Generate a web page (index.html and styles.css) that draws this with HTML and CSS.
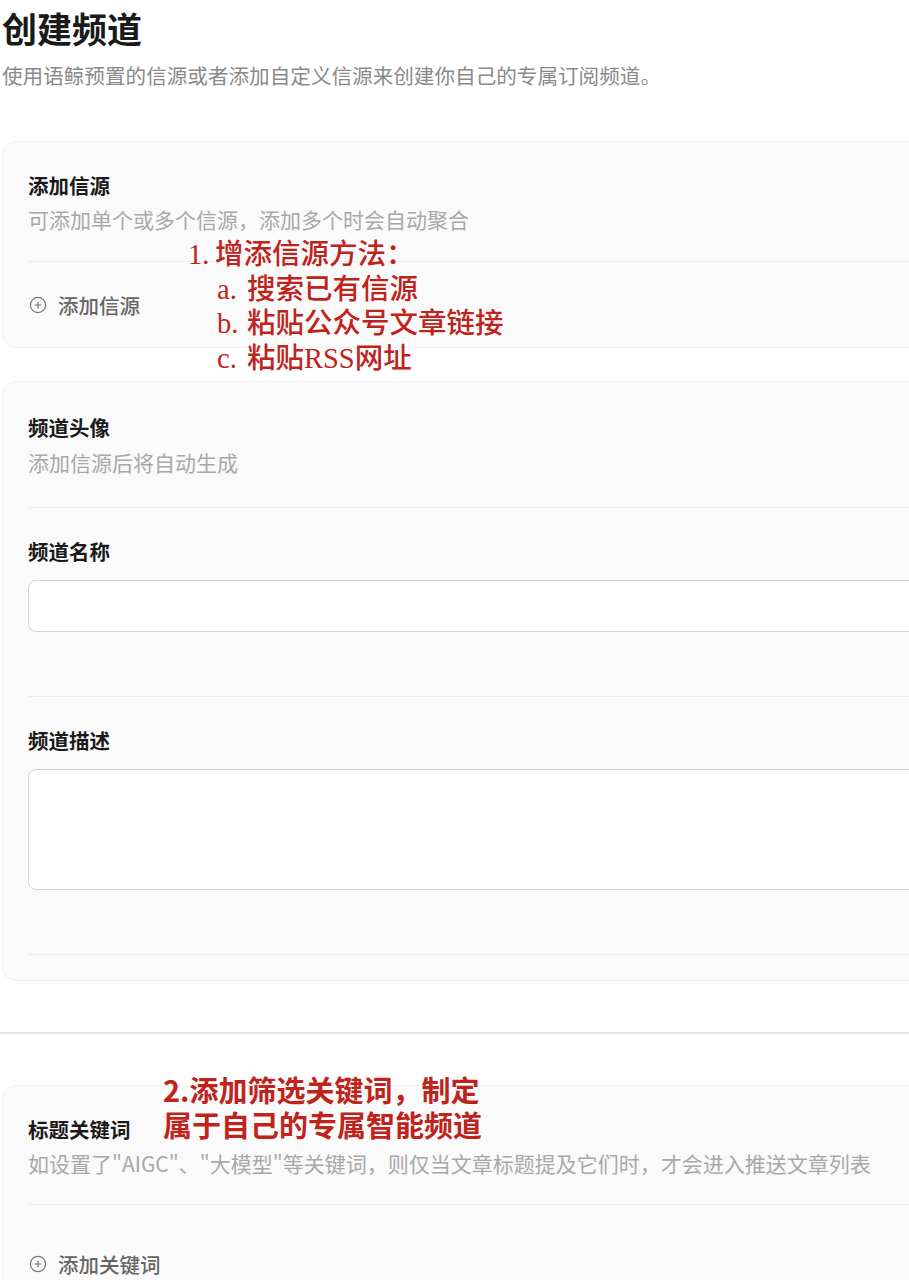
FILE: index.html
```html
<!doctype html>
<html lang="zh-CN">
<head>
<meta charset="utf-8">
<title>创建频道</title>
<link rel="stylesheet" href="styles.css">
</head>
<body>
<div class="page">
  <h1 class="title">创建频道</h1>
  <p class="subtitle">使用语鲸预置的信源或者添加自定义信源来创建你自己的专属订阅频道。</p>

  <div class="card card-sources">
    <div class="section">
      <div class="label">添加信源</div>
      <div class="desc">可添加单个或多个信源，添加多个时会自动聚合</div>
    </div>
    <div class="section section-add">
      <a class="add-btn" href="#">
        <svg class="plus-icon" width="18" height="18" viewBox="0 0 18 18">
          <circle cx="9" cy="9" r="7.6" fill="none" stroke="#777" stroke-width="1.2"/>
          <path d="M9 5.6v6.8M5.6 9h6.8" stroke="#777" stroke-width="1.2" fill="none"/>
        </svg>
        添加信源
      </a>
    </div>
  </div>

  <div class="card card-info">
    <div class="section section-avatar">
      <div class="label">频道头像</div>
      <div class="desc">添加信源后将自动生成</div>
    </div>
    <div class="section section-field">
      <div class="label">频道名称</div>
      <input class="input" type="text">
    </div>
    <div class="section section-field">
      <div class="label">频道描述</div>
      <textarea class="input textarea"></textarea>
    </div>
    <div class="section section-empty"></div>
  </div>

  <hr class="rule">

  <div class="card card-keywords">
    <div class="section section-kw">
      <div class="label">标题关键词</div>
      <div class="desc">如设置了"AIGC"、"大模型"等关键词，则仅当文章标题提及它们时，才会进入推送文章列表</div>
    </div>
    <div class="section section-kw-add">
      <a class="add-btn" href="#">
        <svg class="plus-icon" width="18" height="18" viewBox="0 0 18 18">
          <circle cx="9" cy="9" r="7.6" fill="none" stroke="#777" stroke-width="1.2"/>
          <path d="M9 5.6v6.8M5.6 9h6.8" stroke="#777" stroke-width="1.2" fill="none"/>
        </svg>
        添加关键词
      </a>
    </div>
  </div>

  <div class="note note-sources">
    <div><span class="num first">1.</span>增添信源方法：</div>
    <div class="sub"><span class="num">a.</span>搜索已有信源</div>
    <div class="sub"><span class="num">b.</span>粘贴公众号文章链接</div>
    <div class="sub"><span class="num">c.</span>粘贴RSS网址</div>
  </div>
  <div class="note note-keywords">
    <div>2.添加筛选关键词，制定</div>
    <div>属于自己的专属智能频道</div>
  </div>
</div>
</body>
</html>
```

FILE: styles.css
```css
html, body {
    margin: 0;
    padding: 0;
    background: #fff;
    overflow: hidden;
}
body {
    font-family: "Noto Sans CJK SC", "Noto Sans", sans-serif;
    color: #1a1a1a;
}
.page {
    position: relative;
    width: 1100px;
    padding-left: 2px;
}
.title {
    margin: 0;
    padding-top: 6px;
    font-size: 35px;
    line-height: 44px;
    font-weight: 700;
    color: #1a1a1a;
}
.subtitle {
    margin: 11px 0 0;
    font-size: 20.6px;
    line-height: 28px;
    color: #8a8a8a;
}
.card {
    background: #fafafa;
    border: 1px solid #f0f0f0;
    border-radius: 14px;
    padding-left: 25px;
}
.card-sources {
    margin-top: 52px;
}
.card-info {
    margin-top: 33px;
}
.card-keywords {
    margin-top: 51px;
}
.section {
    padding: 29px 0 28px;
    border-bottom: 1px solid #ececec;
}
.section:last-child {
    border-bottom: none;
}
.label {
    font-size: 20.5px;
    line-height: 28px;
    font-weight: 700;
    color: #1a1a1a;
}
.desc {
    margin-top: 6px;
    font-size: 21px;
    line-height: 28px;
    color: #a8a8a8;
}
.add-btn {
    display: flex;
    align-items: center;
    gap: 11px;
    font-size: 20.5px;
    line-height: 28px;
    font-weight: 500;
    color: #666;
    text-decoration: none;
}
.plus-icon {
    display: block;
    margin-left: 1px;
}
.section-avatar {
    padding: 31px 0 31px;
}
.section-avatar .desc {
    margin-top: 7px;
}
.section-field {
    padding: 29px 0 64px;
}
.input {
    display: block;
    box-sizing: border-box;
    width: 100%;
    height: 52px;
    margin-top: 15px;
    border: 1px solid #d4d4d4;
    border-radius: 8px;
    background: #fff;
    font: inherit;
    outline: none;
    resize: none;
}
.textarea {
    height: 121px;
}
.section-empty {
    padding: 0;
    height: 25px;
}
.rule {
    margin: 51px 0 0 -2px;
    border: none;
    border-top: 2px solid #e4e4e4;
    height: 0;
}
.section-kw {
    padding: 29px 0 27px;
}
.section-kw-add {
    padding: 45px 0 28px;
}
.note {
    position: absolute;
    color: #bf231c;
    white-space: nowrap;
}
.note-sources {
    left: 188px;
    top: 238px;
    font-family: "Liberation Serif", "Noto Sans CJK SC", serif;
    font-size: 28.5px;
    line-height: 34.7px;
    font-weight: 500;
}
.note-sources .num {
    display: inline-block;
    width: 30px;
}
.note-sources .num.first {
    width: 27px;
}
.note-sources .sub {
    padding-left: 29px;
}
.note-keywords {
    left: 163px;
    top: 1072px;
    font-family: "Noto Sans CJK SC", sans-serif;
    font-size: 29px;
    line-height: 35px;
    font-weight: 700;
}
```
